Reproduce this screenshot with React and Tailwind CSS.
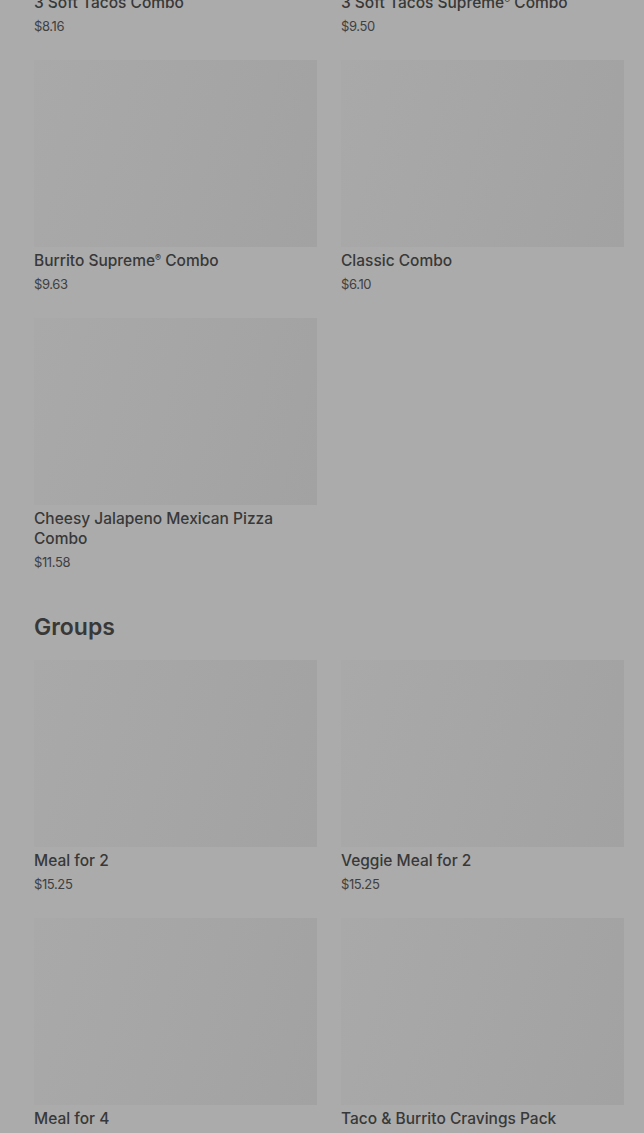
import React from 'react';

const combos = [
  { name: '3 Soft Tacos Combo', price: '$8.16' },
  { name: '3 Soft Tacos Supreme® Combo', price: '$9.50' },
  { name: 'Burrito Supreme® Combo', price: '$9.63' },
  { name: 'Classic Combo', price: '$6.10' },
  { name: 'Cheesy Jalapeno Mexican Pizza Combo', price: '$11.58' },
];

const groups = [
  { name: 'Meal for 2', price: '$15.25' },
  { name: 'Veggie Meal for 2', price: '$15.25' },
  { name: 'Meal for 4', price: '$22.50' },
  { name: 'Taco & Burrito Cravings Pack', price: '$20.99' },
];

const renderName = (name) =>
  name.split('®').map((part, i, arr) => (
    <React.Fragment key={i}>
      {part}
      {i < arr.length - 1 && <sup className="text-[9px] top-[-0.6em]">®</sup>}
    </React.Fragment>
  ));

const ProductCard = ({ item }) => (
  <div className="flex flex-col">
    <div className="h-[187px] bg-[linear-gradient(105deg,#a9a9a9_0%,#a6a6a6_45%,#a2a2a2_100%)]" />
    <p className="mt-1 text-[15.5px] leading-5 font-medium text-[#383838]">{renderName(item.name)}</p>
    <p className="mt-[3px] text-[13px] leading-5 text-[#404040] tracking-[-0.03em]">{item.price}</p>
  </div>
);

const App = () => {
  return (
    <div
      className="h-[1133px] overflow-hidden bg-[#ababab]"
      style={{ fontFamily: 'Inter, "Noto Sans", sans-serif' }}
    >
      <div className="-mt-[198px] pl-[34px] pr-[20px]">
        <div className="grid grid-cols-2 gap-x-6 gap-y-6">
          {combos.map((item) => (
            <ProductCard key={item.name} item={item} />
          ))}
        </div>

        <h2 className="mt-[39px] mb-[17px] text-[23px] leading-8 font-semibold text-[#383838]">Groups</h2>

        <div className="grid grid-cols-2 gap-x-6 gap-y-6">
          {groups.map((item) => (
            <ProductCard key={item.name} item={item} />
          ))}
        </div>
      </div>
    </div>
  );
};

export default App;
